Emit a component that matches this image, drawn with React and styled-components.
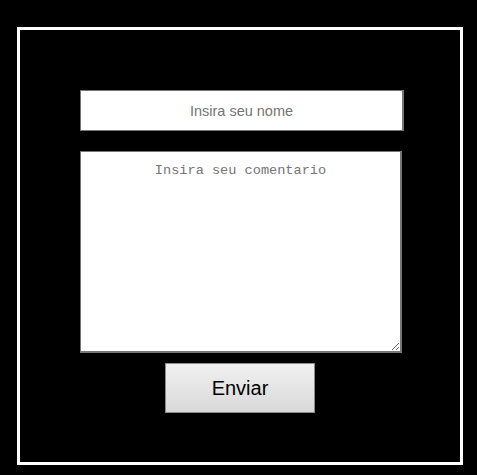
import React from 'react';
import styled, { createGlobalStyle } from 'styled-components';

const Global = createGlobalStyle`
    html, body {
        margin: 0;
        background: #000;
    }
    body {
        padding: 27px 14px 0 17px;
        font-family: "Liberation Sans", Arial, sans-serif;
    }
`;

const Frame = styled.div`
    width: 446px;
    height: 438px;
    border: 3px solid #fff;
    display: flex;
    flex-direction: column;
    align-items: center;
    padding-top: 60px;
    box-sizing: border-box;
`;

const Form = styled.form`
    display: flex;
    flex-direction: column;
    align-items: center;
    width: 100%;
`;

const NameInput = styled.input`
    width: 324px;
    height: 41px;
    margin-left: 4px;
    box-sizing: border-box;
    border: 1px solid #767676;
    border-right-width: 2px;
    background: #fff;
    text-align: center;
    font-family: "Liberation Sans", Arial, sans-serif;
    font-size: 14.5px;
    outline: none;

    &::placeholder {
        color: #757575;
    }
`;

const Comment = styled.textarea`
    display: block;
    width: 322px;
    height: 202px;
    margin: 20px 0 0 2px;
    box-sizing: border-box;
    border: 1px solid #767676;
    border-right-width: 2px;
    border-bottom-width: 2px;
    background: #fff;
    text-align: center;
    padding: 11px 4px;
    font-family: "Liberation Mono", "DejaVu Sans Mono", monospace;
    font-size: 13.6px;
    outline: none;

    &::placeholder {
        color: #757575;
    }
`;

const Send = styled.button`
    width: 150px;
    height: 50px;
    margin-top: 10px;
    border: 1px solid #8a8a8a;
    background: linear-gradient(#f1f1f1, #d9d9d9);
    font-family: "Liberation Sans", Arial, sans-serif;
    font-size: 20px;
    color: #000;
    cursor: pointer;
`;

const App = () => {
    return (
        <>
            <Global />
            <Frame>
                <Form onSubmit={e => e.preventDefault()}>
                    <NameInput type="text" placeholder="Insira seu nome" />
                    <Comment placeholder="Insira seu comentario" />
                    <Send type="submit">Enviar</Send>
                </Form>
            </Frame>
        </>
    );
};

export default App;
